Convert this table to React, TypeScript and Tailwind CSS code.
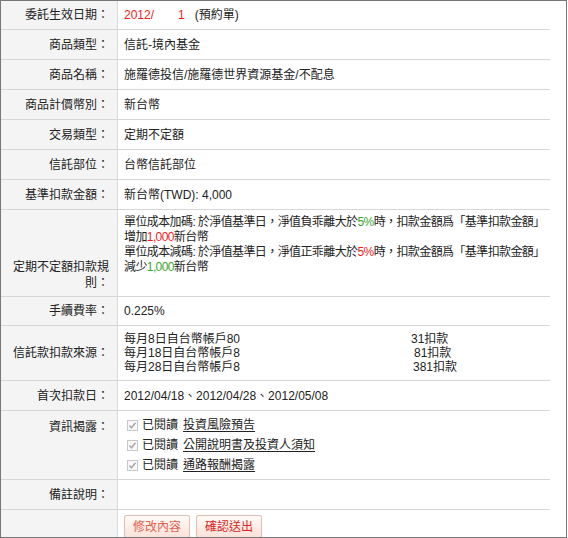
import type { ReactNode } from "react";

const font = "font-['Liberation_Sans','Noto_Sans_CJK_TC',sans-serif]";

type RowProps = {
  label?: ReactNode;
  h: string;
  labelAlign?: string;
  children?: ReactNode;
  last?: boolean;
};

function Row({ label, h, labelAlign = "items-center", children, last }: RowProps) {
  return (
    <div className={`flex ${h} ${last ? "" : "border-b border-[#d6d6d6]"}`}>
      <div className={`w-[117px] shrink-0 flex justify-end pr-[8px] bg-[#f4f4f4] border-r border-[#dadada] ${labelAlign}`}>
        <div className="text-right leading-[16px]">{label}</div>
      </div>
      <div className="flex-1 pl-[6px] flex items-center">{children}</div>
    </div>
  );
}

function CheckItem({ link }: { link: string }) {
  return (
    <div className="flex items-center h-[20px]">
      <span className="w-[11px] h-[11px] border border-[#c8c8c8] bg-[#f8f8f8] mr-[4px] ml-[3px] flex items-center justify-center">
        <svg width="9" height="9" viewBox="0 0 9 9">
          <path d="M1.5 4.5 L3.5 6.8 L7.5 1.8" fill="none" stroke="#a8a8a8" strokeWidth="1.4" />
        </svg>
      </span>
      <span>已閱讀</span>
      <span className="ml-[5px] underline underline-offset-2">{link}</span>
    </div>
  );
}

export default function App() {
  return (
    <div className={`${font} text-[12px] text-[#222] bg-white w-[567px] h-[538px] overflow-hidden`}>
      <div className="w-[567px] h-[538px] border border-[#777] pr-[16px] overflow-hidden">
        <Row label="委託生效日期：" h="h-[29px]">
          <span className="text-[#f01c1c]">2012/</span>
          <span className="text-[#f01c1c] ml-[24px]">1</span>
          <span className="ml-[10px]">(預約單)</span>
        </Row>
        <Row label="商品類型：" h="h-[30px]">信託-境內基金</Row>
        <Row label="商品名稱：" h="h-[30px]">施羅德投信/施羅德世界資源基金/不配息</Row>
        <Row label="商品計價幣別：" h="h-[30px]">新台幣</Row>
        <Row label="交易類型：" h="h-[30px]">定期不定額</Row>
        <Row label="信託部位：" h="h-[30px]">台幣信託部位</Row>
        <Row label="基準扣款金額：" h="h-[30px]">新台幣(TWD): 4,000</Row>
        <Row
          label={
            <>
              定期不定額扣款規
              <br />
              則：
            </>
          }
          h="h-[87px]"
          labelAlign="items-end pb-[5px]"
        >
          <div className="self-start pt-[5px] leading-[15px] whitespace-nowrap tracking-[-0.6px]">
            <div>
              單位成本加碼: 於淨值基準日，淨值負乖離大於<span className="text-[#3aa52c]">5%</span>時，扣款金額爲「基準扣款金額」
            </div>
            <div>
              增加<span className="text-[#f01c1c]">1,000</span>新台幣
            </div>
            <div>
              單位成本減碼: 於淨值基準日，淨值正乖離大於<span className="text-[#f01c1c]">5%</span>時，扣款金額爲「基準扣款金額」
            </div>
            <div>
              減少<span className="text-[#3aa52c]">1,000</span>新台幣
            </div>
          </div>
        </Row>
        <Row label="手續費率：" h="h-[29px]">0.225%</Row>
        <Row label="信託款扣款來源：" h="h-[55px]">
          <div className="leading-[14px] whitespace-nowrap">
            <div className="flex">
              <span className="w-[287px]">每月8日自台幣帳戶80</span>
              <span>31扣款</span>
            </div>
            <div className="flex">
              <span className="w-[290px]">每月18日自台幣帳戶8</span>
              <span>81扣款</span>
            </div>
            <div className="flex">
              <span className="w-[289px]">每月28日自台幣帳戶8</span>
              <span>381扣款</span>
            </div>
          </div>
        </Row>
        <Row label="首次扣款日：" h="h-[30px]">2012/04/18、2012/04/28、2012/05/08</Row>
        <Row label="資訊揭露：" h="h-[69px]" labelAlign="items-start pt-[8px]">
          <div className="self-start pt-[4px]">
            <CheckItem link="投資風險預告" />
            <CheckItem link="公開說明書及投資人須知" />
            <CheckItem link="通路報酬揭露" />
          </div>
        </Row>
        <Row label="備註說明：" h="h-[30px]" />
        <Row h="h-[40px]" last>
          <div className="self-start pt-[5px] flex gap-[6px]">
            <button className="h-[23px] px-[8px] border border-[#dcc0b6] rounded-[2px] bg-gradient-to-b from-[#fffaf7] to-[#fbe2d9] text-[#e2604c]">
              修改內容
            </button>
            <button className="h-[23px] px-[8px] border border-[#dcc0b6] rounded-[2px] bg-gradient-to-b from-[#fffaf7] to-[#fbe2d9] text-[#e0241c]">
              確認送出
            </button>
          </div>
        </Row>
      </div>
    </div>
  );
}
